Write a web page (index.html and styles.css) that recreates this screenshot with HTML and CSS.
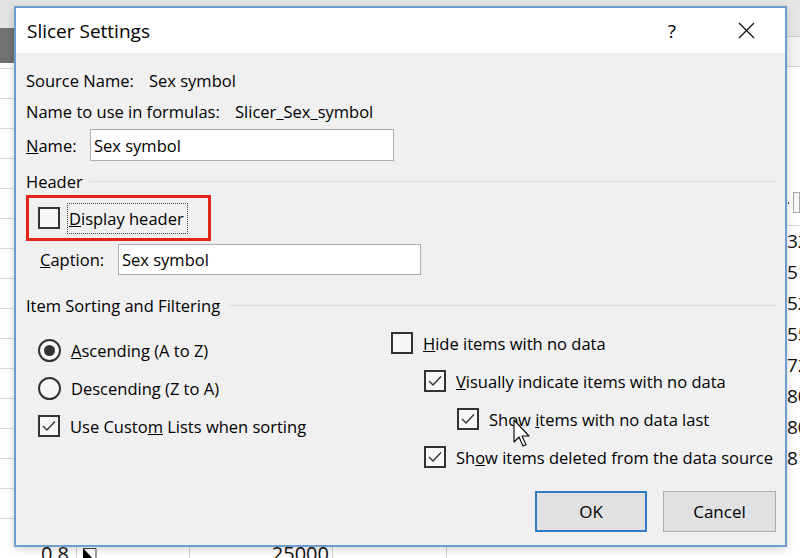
FILE: index.html
```html
<!DOCTYPE html>
<html lang="en">
<head>
<meta charset="utf-8">
<title>Slicer Settings</title>
<link rel="stylesheet" href="styles.css">
</head>
<body>
<div class="sheet">
  <div class="strip-left">
    <div class="lh"></div>
    <div class="ld"></div>
    <div class="lg"></div>
  </div>
  <div class="strip-mid"></div>
  <div class="strip-right">
    <div class="rh1"></div>
    <div class="rh2"></div>
    <div class="rf"><span class="rdot"></span><span class="rbox"></span></div>
    <div class="rn">32</div>
    <div class="rn">51</div>
    <div class="rn">52</div>
    <div class="rn">55</div>
    <div class="rn">72</div>
    <div class="rn">80</div>
    <div class="rn">80</div>
    <div class="rn">81</div>
    <div class="rfill"></div>
  </div>
  <div class="bottom-row">
    <div class="bcell c1"><span class="bt">0.8</span></div>
    <div class="bcell c2"><svg class="tri" viewBox="0 0 15 12" width="15" height="12"><path d="M1 0 L1 12 L12 12 Z" fill="#000"/><path d="M1 0.5 H14 V12" stroke="#444" fill="none"/></svg></div>
    <div class="bcell c3"><span class="bt">25000</span></div>
    <div class="bcell c4"></div>
    <div class="bcell c5"></div>
  </div>
</div>

<div class="dialog">
  <div class="titlebar">
    <span class="title">Slicer Settings</span>
    <span class="help">?</span>
    <svg class="close" viewBox="0 0 17 17" width="17" height="17"><path d="M1 1 L16 16 M16 1 L1 16" stroke="#111" stroke-width="1.3" fill="none"/></svg>
  </div>
  <div class="body">
    <div class="info-row"><span class="lbl w-source">Source Name:</span><span>Sex symbol</span></div>
    <div class="info-row"><span class="lbl w-formula">Name to use in formulas:</span><span>Slicer_Sex_symbol</span></div>
    <div class="name-row"><span class="lbl w-name"><u>N</u>ame:</span><div class="input input-name">Sex symbol</div></div>
    <div class="group"><span>Header</span><span class="rule"></span></div>
    <div class="highlight">
      <span class="cb"></span>
      <span class="focus"><u>D</u>isplay header</span>
    </div>
    <div class="caption-row"><span class="lbl w-caption"><u>C</u>aption:</span><div class="input input-caption">Sex symbol</div></div>
    <div class="group group2"><span>Item Sorting and Filtering</span><span class="rule"></span></div>
    <div class="cols">
      <div class="col-left">
        <div class="opt"><span class="radio on"></span><span><u>A</u>scending (A to Z)</span></div>
        <div class="opt"><span class="radio"></span><span>Descending (Z to A)</span></div>
        <div class="opt"><span class="cb"><svg viewBox="0 0 18 18"><polyline points="3,9 7,13 15,4.5"/></svg></span><span>Use Custo<u>m</u> Lists when sorting</span></div>
      </div>
      <div class="col-right">
        <div class="opt"><span class="cb"></span><span><u>H</u>ide items with no data</span></div>
        <div class="opt ind1"><span class="cb"><svg viewBox="0 0 18 18"><polyline points="3,9 7,13 15,4.5"/></svg></span><span><u>V</u>isually indicate items with no data</span></div>
        <div class="opt ind2"><span class="cb"><svg viewBox="0 0 18 18"><polyline points="3,9 7,13 15,4.5"/></svg></span><span>Show <u>i</u>tems with no data last</span></div>
        <div class="opt ind1"><span class="cb"><svg viewBox="0 0 18 18"><polyline points="3,9 7,13 15,4.5"/></svg></span><span>Sh<u>o</u>w items deleted from the data source</span></div>
      </div>
    </div>
    <div class="footer">
      <button class="btn btn-ok">OK</button>
      <button class="btn btn-cancel">Cancel</button>
    </div>
  </div>
</div>

<svg class="cursor" viewBox="0 0 19 29" width="19" height="29"><path d="M1 1 L1 23 L6 18 L10 27 L13 25.7 L9 17 L16 17 Z" fill="#fff" stroke="#000" stroke-width="1.1" stroke-linejoin="round"/></svg>
</body>
</html>
```

FILE: styles.css
```css
* { box-sizing: border-box; margin: 0; padding: 0; }
html, body { width: 800px; height: 558px; overflow: hidden; }
body {
  position: relative;
  background: #fff;
  font-family: "Open Sans", "Noto Sans", sans-serif;
  color: #000;
}

/* ---------- spreadsheet behind the dialog ---------- */
.sheet {
  display: grid;
  grid-template-columns: 14px 1fr 13px;
  grid-template-rows: 547px 11px;
  height: 558px;
}
.strip-left { display: flex; flex-direction: column; }
.lh { height: 28px; background: #e4e4e4; }
.ld { height: 35px; background: #727272; }
.lg {
  flex: 1;
  background: repeating-linear-gradient(to bottom, #fff 0, #fff 29px, #d6d6d6 29px, #d6d6d6 30px);
  background-position: 0 -24px;
}
.strip-mid { background: linear-gradient(to bottom, #e4e4e4 0, #e4e4e4 6px, #fff 6px); }
.strip-right { display: flex; flex-direction: column; overflow: hidden; }
.rh1 { height: 37px; background: #e6e6e6; border-bottom: 1px solid #c9c9c9; }
.rh2 { height: 30px; background: #f3f3f3; border-bottom: 1px solid #d2d2d2; }
.rf {
  height: 159px;
  border-bottom: 1px solid #d6d6d6;
  display: flex;
  align-items: flex-end;
  padding-bottom: 12px;
  gap: 4px;
}
.rdot { width: 2px; height: 2px; background: #444; margin-bottom: 9px; margin-left: 1px; }
.rbox { width: 10px; height: 21px; border: 1px solid #a9a9a9; background: #f7f7f7; }
.rn {
  height: 31px;
  flex: none;
  font-size: 19px;
  line-height: 30px;
  white-space: nowrap;
  color: #111;
}
.rfill { flex: 1; }

.bottom-row {
  grid-column: 1 / -1;
  display: flex;
  overflow: hidden;
  font-size: 20px;
  line-height: 20px;
  color: #111;
}
.bcell { height: 11px; border-right: 1px solid #cfcfcf; flex: none; overflow: hidden; }
.bt { display: block; margin-top: -3px; }
.c1 { width: 77px; text-align: right; padding-right: 7px; }
.c2 { width: 113px; padding-left: 5px; padding-top: 1px; }
.c3 { width: 143px; text-align: right; padding-right: 3px; }
.c4 { width: 114px; }
.c5 { flex: 1; border-right: none; }
.tri { display: block; }

/* ---------- dialog ---------- */
.dialog {
  position: absolute;
  left: 14px;
  top: 6px;
  width: 773px;
  height: 541px;
  border: 2px solid #6f9dcf;
  background: #f0f0f0;
  box-shadow: 0 2px 8px rgba(0, 0, 0, 0.18);
  display: flex;
  flex-direction: column;
  font-size: 16.5px;
}
.titlebar {
  height: 45px;
  background: #fff;
  display: flex;
  align-items: center;
  padding-left: 11px;
  flex: none;
}
.title { font-size: 19px; }
.help { margin-left: auto; font-size: 19px; }
.close { margin-left: 62px; margin-right: 30px; display: block; }

.body { padding: 12px 8px 0 10px; flex: 1; }
.lbl { flex: none; }
.info-row { height: 31px; display: flex; align-items: center; }
.w-source { width: 123px; }
.w-formula { width: 209px; }
.w-name { width: 64px; }
.name-row { height: 36px; display: flex; align-items: center; }
.input {
  height: 32px;
  border: 1px solid #adadad;
  background: #fff;
  display: flex;
  align-items: center;
  padding-left: 3px;
}
.input-name { width: 304px; }

.group { height: 32px; padding-top: 4px; display: flex; align-items: center; gap: 7px; }
.group2 { height: 42px; padding-top: 12px; gap: 8px; }
.rule { flex: 1; height: 1px; background: #dcdcdc; }

.highlight {
  width: 185px;
  height: 46px;
  border: 3px solid #e4251c;
  display: flex;
  align-items: center;
  padding-left: 9px;
}
.focus {
  margin-left: 7px;
  height: 31px;
  width: 121px;
  border: 1px dotted #444;
  display: flex;
  align-items: center;
  padding-left: 1px;
  white-space: nowrap;
}

.caption-row { height: 37px; display: flex; align-items: center; padding-left: 14px; }
.w-caption { width: 78px; }
.input-caption { width: 303px; height: 31px; }

.cb {
  width: 22px;
  height: 22px;
  border: 2px solid #333;
  background: #f7f7f7;
  flex: none;
  display: block;
}
.cb svg { display: block; width: 100%; height: 100%; }
.cb polyline { fill: none; stroke: #333; stroke-width: 1.4; }
.radio {
  width: 23px;
  height: 23px;
  border-radius: 50%;
  border: 2px solid #333;
  background: #f7f7f7;
  flex: none;
  display: flex;
  align-items: center;
  justify-content: center;
}
.radio.on::after {
  content: "";
  width: 11px;
  height: 11px;
  border-radius: 50%;
  background: #333;
}

.cols { display: grid; grid-template-columns: 365px 1fr; height: 171px; }
.col-left { padding: 11px 0 0 12px; }
.col-right { padding-top: 4px; }
.opt { height: 38px; display: flex; align-items: center; gap: 10px; white-space: nowrap; }
.ind1 { padding-left: 33px; }
.ind2 { padding-left: 66px; }

.footer { display: flex; justify-content: flex-end; gap: 16px; padding-right: 1px; }
.btn {
  height: 41px;
  background: #e1e1e1;
  font-family: inherit;
  font-size: 17px;
  color: #000;
}
.btn-ok { width: 112px; border: 2px solid #2f7bc6; }
.btn-cancel { width: 113px; border: 1px solid #adadad; }

.cursor { position: absolute; left: 513px; top: 419px; }
```
